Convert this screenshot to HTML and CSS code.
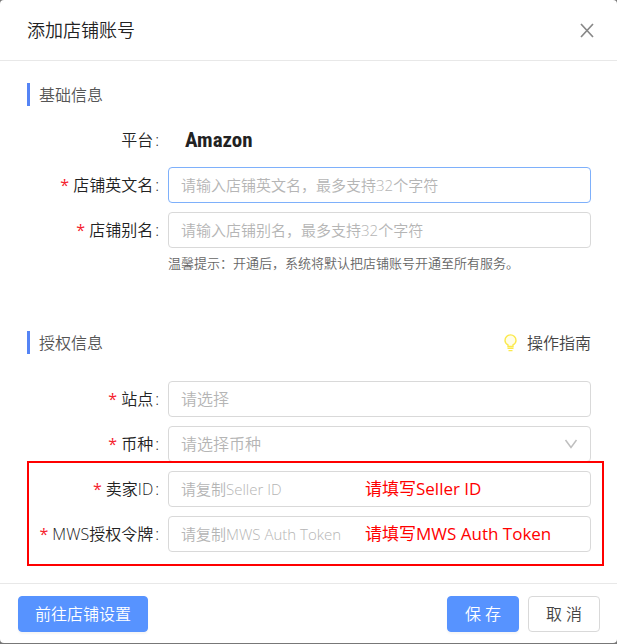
FILE: index.html
```html
<!DOCTYPE html>
<html lang="zh-CN">
<head>
  <meta charset="UTF-8">
  <meta name="viewport" content="width=device-width, initial-scale=1.0">
  <title>添加店铺账号</title>
  <link rel="stylesheet" href="styles.css">
</head>
<body>

  <form class="modal">
    <header class="modal-header">
      <h1>添加店铺账号</h1>
      <button type="button" class="close" aria-label="关闭">
        <svg width="14" height="16" viewBox="0 0 14 16"><path d="M1 2l12 13M13 2L1 15" fill="none" stroke="#888" stroke-width="1.7"/></svg>
      </button>
    </header>

    <main class="modal-body">
      <!-- 基础信息 -->
      <section class="section">
        <div class="section-title">
          <h2>基础信息</h2>
        </div>
        <div class="rows">
          <div class="row">
            <span class="label">平台<span class="colon">:</span></span>
            <strong class="platform">Amazon</strong>
          </div>
          <div class="row">
            <label class="label required" for="shop-en">店铺英文名<span class="colon">:</span></label>
            <input class="control active" id="shop-en" type="text" maxlength="32" placeholder="请输入店铺英文名，最多支持32个字符">
          </div>
          <div class="row">
            <label class="label required" for="shop-alias">店铺别名<span class="colon">:</span></label>
            <input class="control" id="shop-alias" type="text" maxlength="32" placeholder="请输入店铺别名，最多支持32个字符">
          </div>
        </div>
        <p class="hint">温馨提示：开通后，系统将默认把店铺账号开通至所有服务。</p>
      </section>

      <!-- 授权信息 -->
      <section class="section auth">
        <div class="section-title">
          <h2>授权信息</h2>
          <a class="guide" href="#">
            <svg width="13" height="18" viewBox="0 0 13 18"><path d="M4 12.5v-1.6C2 9.700 1 8.200 1 6.400a5.500 5.500 0 0 1 11 0c0 1.800-1 3.300-3 4.500v1.600z" fill="#fffde8" stroke="#fbe94b" stroke-width="1.4"/><path d="M3.500 14.200h6M4.500 16.600h4" stroke="#fbe94b" stroke-width="1.4"/></svg>
            操作指南
          </a>
        </div>
        <div class="rows">
          <div class="row">
            <label class="label required" for="site">站点<span class="colon">:</span></label>
            <select class="control" id="site"><option>请选择</option></select>
          </div>
          <div class="row">
            <label class="label required" for="currency">币种<span class="colon">:</span></label>
            <div class="field">
              <select class="control" id="currency"><option>请选择币种</option></select>
              <svg class="arrow" width="14" height="10" viewBox="0 0 14 10"><path d="M1.500 1L7 8.500 12.500 1" fill="none" stroke="#bfbfbf" stroke-width="1.5"/></svg>
            </div>
          </div>
          <div class="rows marked">
            <div class="row">
              <label class="label required" for="seller-id">卖家ID<span class="colon">:</span></label>
              <div class="field">
                <input class="control" id="seller-id" type="text" placeholder="请复制Seller ID">
                <span class="note">请填写Seller ID</span>
              </div>
            </div>
            <div class="row">
              <label class="label required" for="mws-token">MWS授权令牌<span class="colon">:</span></label>
              <div class="field">
                <input class="control" id="mws-token" type="text" placeholder="请复制MWS Auth Token">
                <span class="note">请填写MWS Auth Token</span>
              </div>
            </div>
          </div>
        </div>
      </section>
    </main>

    <footer class="modal-footer">
      <button type="button" class="btn primary settings">前往店铺设置</button>
      <button type="submit" class="btn primary">保 存</button>
      <button type="button" class="btn">取 消</button>
    </footer>
  </form>

</body>
</html>
```

FILE: styles.css
```css
* {
  box-sizing: border-box;
}

body {
  margin: 0;
  padding-bottom: 1px;
  background: #777;
  color: #222;
  font-family: "Open Sans", "Noto Sans CJK SC", sans-serif;
  font-size: 16px;
  font-weight: 350;
  line-height: 24px;
}

h1, h2, p {
  margin: 0;
  font-weight: inherit;
}

button, input, select {
  font: inherit;
}

.modal {
  display: flex;
  flex-direction: column;
  min-height: calc(100vh - 1px);
  background: #fff;
  border-radius: 4px;
}

.modal-header {
  display: flex;
  align-items: center;
  justify-content: space-between;
  height: 61px;
  padding: 0 23px 0 27px;
  border-bottom: 1px solid #e8e8e8;
}

.modal-header h1 {
  font-size: 18px;
}

.close {
  display: flex;
  padding: 0;
  border: 0;
  background: none;
  cursor: pointer;
}

.modal-body {
  flex: 1;
  padding: 22px 26px 30px 27px;
}

.section-title {
  display: flex;
  align-items: center;
  justify-content: space-between;
  height: 23px;
  margin-bottom: 16px;
  padding-left: 9px;
  border-left: 3px solid #5584f5;
}

.section-title h2 {
  color: #555;
  font-size: 16px;
}

.auth {
  margin-top: 58px;
}

.auth .section-title {
  margin-bottom: 27px;
}

.guide {
  display: flex;
  align-items: center;
  gap: 10px;
  color: #444;
  text-decoration: none;
}

.rows {
  display: grid;
  gap: 9px;
}

.row {
  display: grid;
  grid-template-columns: 132px 1fr;
  column-gap: 9px;
  align-items: center;
  height: 36px;
}

.label {
  text-align: right;
  white-space: nowrap;
}

.required::before {
  content: "*";
  margin-right: 4px;
  color: #f5222d;
  font-weight: 400;
}

.colon {
  margin-left: 2px;
}

.platform {
  padding-left: 17px;
  color: #222;
  font-family: "Roboto Condensed", Roboto, sans-serif;
  font-size: 21px;
  font-weight: 700;
}

.field {
  position: relative;
}

.control {
  display: block;
  width: 100%;
  height: 36px;
  padding: 0 12px;
  border: 1px solid #d9d9d9;
  border-radius: 4px;
  outline: none;
  background: #fff;
  appearance: none;
}

.control:focus,
.control.active {
  border-color: #7eb0fb;
}

input.control {
  font-size: 15px;
}

input.control::placeholder,
select.control {
  color: #b5b5b5;
}

.arrow {
  position: absolute;
  top: 13px;
  right: 13px;
  pointer-events: none;
}

.hint {
  margin: 5px 0 0 141px;
  color: #666;
  font-size: 13px;
  line-height: 20px;
}

/* red frame round the seller fields */
.marked {
  position: relative;
}

.marked::after {
  content: "";
  position: absolute;
  inset: -10px -13px -14px 0;
  border: 2px solid #f00;
  pointer-events: none;
}

.note {
  position: absolute;
  top: 6px;
  left: 197px;
  color: #f00;
  font-size: 17px;
  font-weight: 400;
  white-space: nowrap;
  pointer-events: none;
}

.modal-footer {
  display: flex;
  gap: 9px;
  padding: 12px 17px 11px 18px;
  border-top: 1px solid #e8e8e8;
}

.btn {
  min-width: 72px;
  height: 36px;
  padding: 0 16px;
  border: 1px solid #d9d9d9;
  border-radius: 4px;
  background: #fff;
  color: #444;
  cursor: pointer;
}

.primary {
  border-color: #5793ff;
  background: #5793ff;
  color: #fff;
  box-shadow: 0 2px 2px rgba(0, 0, 0, 0.04);
}

.settings {
  margin-right: auto;
}
```
